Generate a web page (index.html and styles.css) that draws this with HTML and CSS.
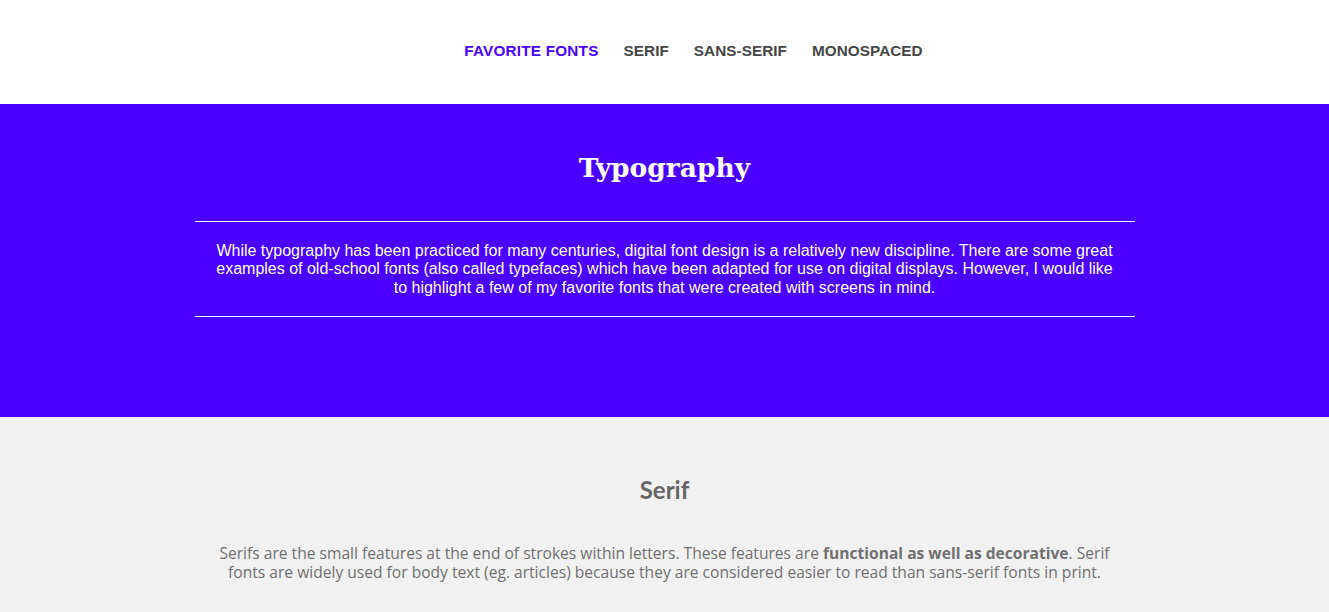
FILE: index.html
```html
<!DOCTYPE html>
<html lang="en">
<head>
<meta charset="utf-8">
<title>Typography</title>
<link rel="stylesheet" href="styles.css">
</head>
<body>
<nav class="nav">
  <a class="nav-link active" href="#">Favorite Fonts</a>
  <a class="nav-link" href="#">Serif</a>
  <a class="nav-link" href="#">Sans-Serif</a>
  <a class="nav-link" href="#">Monospaced</a>
</nav>
<header class="hero">
  <h1 class="hero-title">Typography</h1>
  <div class="hero-body">
    <p class="hero-text">While typography has been practiced for many centuries, digital font design is a relatively new discipline. There are some great examples of old-school fonts (also called typefaces) which have been adapted for use on digital displays. However, I would like to highlight a few of my favorite fonts that were created with screens in mind.</p>
  </div>
</header>
<section class="section">
  <h2 class="section-title">Serif</h2>
  <p class="section-text">Serifs are the small features at the end of strokes within letters. These features are <strong>functional as well as decorative</strong>. Serif fonts are widely used for body text (eg. articles) because they are considered easier to read than sans-serif fonts in print.</p>
</section>
</body>
</html>
```
FILE: styles.css
```css
html, body {
  margin: 0;
  padding: 0;
}
body {
  background: #f1f1f1;
  font-family: "Liberation Sans", Arial, sans-serif;
}
.nav {
  background: #ffffff;
  height: 104px;
  display: flex;
  justify-content: center;
  align-items: center;
  gap: 25px;
  padding-left: 58px;
  padding-bottom: 2px;
  box-sizing: border-box;
}
.nav-link {
  font-family: "Liberation Sans", Arial, sans-serif;
  font-weight: bold;
  font-size: 15.3px;
  text-transform: uppercase;
  text-decoration: none;
  color: #464646;
  letter-spacing: 0.05px;
}
.nav-link.active {
  color: #4a00ff;
  letter-spacing: 0.2px;
}
.hero {
  background: #4a00ff;
  height: 313px;
  padding-top: 1px;
  box-sizing: border-box;
  color: #ffffff;
}
.hero-title {
  font-family: "DejaVu Serif", Georgia, serif;
  font-size: 26.5px;
  font-weight: bold;
  text-align: center;
  margin: 43px 0 0;
  line-height: 40px;
}
.hero-body {
  width: 940px;
  margin: 33px auto 0;
  border-top: 1px solid #ffffff;
  border-bottom: 1px solid #ffffff;
  padding: 20px 20px 19px;
  box-sizing: border-box;
}
.hero-text {
  margin: 0;
  font-size: 16px;
  line-height: 18.4px;
  text-align: center;
}
.section {
  padding: 58px 0 40px;
  text-align: center;
  color: #6b6b6b;
}
.section-title {
  margin: 0;
  font-family: Lato, "Open Sans", sans-serif;
  font-size: 24px;
  line-height: 30px;
  font-weight: bold;
  color: #666666;
}
.section-text {
  width: 900px;
  margin: 39px auto 0;
  font-family: "Open Sans", Lato, sans-serif;
  font-size: 15.6px;
  line-height: 19px;
  color: #707070;
}
.section-text strong {
  font-weight: bold;
}
```
